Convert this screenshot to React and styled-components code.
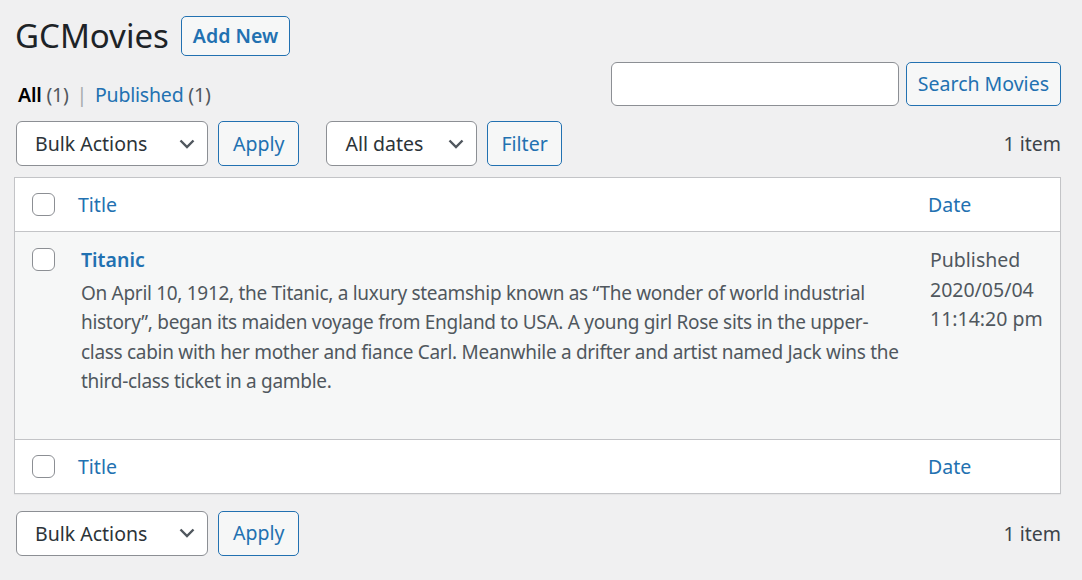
import React from 'react';
import styled, { createGlobalStyle } from 'styled-components';

const GlobalStyle = createGlobalStyle`
  html, body {
    margin: 0;
    padding: 0;
    background: #f0f0f1;
  }
  body {
    font-family: "Noto Sans", "Open Sans", sans-serif;
    font-size: 19.5px;
    color: #3c434a;
  }
`;

const Page = styled.div`
  padding: 16px 21px 0 14px;
`;

const HeadingRow = styled.div`
  display: flex;
  align-items: center;
  gap: 12px;
  height: 40px;
`;

const Heading = styled.h1`
  margin: 0 0 0 1px;
  font-size: 33px;
  font-weight: 400;
  color: #1d2327;
  line-height: 40px;
`;

const Button = styled.button`
  height: ${p => p.$h || 45}px;
  padding: 0 ${p => p.$px || 14}px;
  background: #f6f7f7;
  border: 1px solid #2271b1;
  border-radius: 5px;
  color: #2271b1;
  font-family: inherit;
  font-size: 19.5px;
  font-weight: ${p => (p.$bold ? 600 : 400)};
  line-height: 1;
  white-space: nowrap;
  cursor: pointer;
`;

const SubRow = styled.div`
  display: flex;
  justify-content: space-between;
  align-items: flex-start;
  margin-top: 6px;
  height: 45px;
`;

const Views = styled.div`
  margin: 20px 0 0 4px;
  line-height: 26px;
  color: #50575e;
  letter-spacing: -0.2px;
`;

const ViewLink = styled.span`
  color: ${p => (p.$current ? '#000' : '#2271b1')};
  font-weight: ${p => (p.$current ? 600 : 400)};
`;

const Sep = styled.span`
  color: #a7aaad;
  margin: 0 3px;
`;

const SearchBox = styled.div`
  display: flex;
  gap: 7px;
`;

const SearchInput = styled.input`
  width: 288px;
  height: 44px;
  box-sizing: border-box;
  border: 1px solid #8c8f94;
  border-radius: 6px;
  background: #fff;
  font-family: inherit;
  font-size: 19.5px;
`;

const TableNav = styled.div`
  display: flex;
  align-items: center;
  margin: ${p => p.$m};
  padding-left: 2px;
`;

const Actions = styled.div`
  display: flex;
  gap: 10px;
  margin-right: 27px;
`;

const Select = styled.div`
  width: ${p => p.$w}px;
  height: 45px;
  box-sizing: border-box;
  border: 1px solid #8c8f94;
  border-radius: 6px;
  background: #fff;
  display: flex;
  align-items: center;
  justify-content: space-between;
  padding: 0 12px 0 18px;
  color: #2c3338;
`;

const Count = styled.div`
  margin-left: auto;
  color: #3c434a;
`;

const Table = styled.table`
  width: 100%;
  margin-top: 11px;
  border: 1px solid #c3c4c7;
  border-spacing: 0;
  table-layout: fixed;
  background: #fff;
  box-shadow: 0 1px 1px rgba(0, 0, 0, 0.04);
`;

const HeadCell = styled.th`
  box-sizing: border-box;
  width: ${p => (p.$w ? `${p.$w}px` : 'auto')};
  height: 54px;
  padding: 0 0 0 ${p => p.$pl || 0}px;
  text-align: left;
  font-weight: 400;
  color: #2271b1;
  vertical-align: middle;
  border-${p => p.$edge}: 1px solid #c3c4c7;
`;

const CheckCell = styled.td`
  width: 52px;
  height: 54px;
  padding: ${p => (p.$body ? '16px 0 0 17px' : '0 0 0 17px')};
  vertical-align: ${p => (p.$body ? 'top' : 'middle')};
  box-sizing: border-box;
  border-${p => p.$edge}: 1px solid #c3c4c7;
`;

const Checkbox = styled.span`
  display: block;
  width: 23px;
  height: 23px;
  box-sizing: border-box;
  border: 1px solid #8c8f94;
  border-radius: 6px;
  background: #fff;
`;

const BodyRow = styled.tr`
  background: #f6f7f7;
`;

const Cell = styled.td`
  padding: 13px ${p => p.$pr || 0}px 42px ${p => p.$pl}px;
  vertical-align: top;
  line-height: 29.5px;
  color: #50575e;
`;

const RowTitle = styled.div`
  color: #2271b1;
  font-weight: 600;
`;

const Excerpt = styled.p`
  margin: 4px 0 0;
  font-size: 19px;
  letter-spacing: -0.3px;
  color: #50575e;
`;

function Chevron() {
  return (
    <svg width="16" height="10" viewBox="0 0 16 10">
      <polyline points="1.5,1.5 8,8 14.5,1.5" fill="none" stroke="#50575e" strokeWidth="2.4" />
    </svg>
  );
}

function HeaderRow({ edge }) {
  return (
    <tr>
      <CheckCell $edge={edge}><Checkbox /></CheckCell>
      <HeadCell $pl={11} $edge={edge}>Title</HeadCell>
      <HeadCell $pl={15} $w={147} $edge={edge}>Date</HeadCell>
    </tr>
  );
}

function Nav({ top }) {
  return (
    <TableNav $m={top ? '14px 0 0' : '17px 0 0'}>
      <Actions>
        <Select $w={192}>Bulk Actions<Chevron /></Select>
        <Button $px={14}>Apply</Button>
      </Actions>
      {top && (
        <Actions>
          <Select $w={151}>All dates<Chevron /></Select>
          <Button $px={13}>Filter</Button>
        </Actions>
      )}
      <Count>1 item</Count>
    </TableNav>
  );
}

export default function App() {
  return (
    <>
      <GlobalStyle />
      <Page>
        <HeadingRow>
          <Heading>GCMovies</Heading>
          <Button $h={40} $px={11} $bold>Add New</Button>
        </HeadingRow>
        <SubRow>
          <Views>
            <ViewLink $current>All</ViewLink> (1) <Sep>|</Sep> <ViewLink>Published</ViewLink> (1)
          </Views>
          <SearchBox>
            <SearchInput type="search" />
            <Button $h={44} $px={11}>Search Movies</Button>
          </SearchBox>
        </SubRow>
        <Nav top />
        <Table>
          <thead><HeaderRow edge="bottom" /></thead>
          <tbody>
            <BodyRow>
              <CheckCell $body><Checkbox /></CheckCell>
              <Cell $pl={14} $pr={14}>
                <RowTitle>Titanic</RowTitle>
                <Excerpt>
                  On April 10, 1912, the Titanic, a luxury steamship known as “The wonder of world industrial
                  history”, began its maiden voyage from England to USA. A young girl Rose sits in the upper-class
                  cabin with her mother and fiance Carl. Meanwhile a drifter and artist named Jack wins the
                  third-class ticket in a gamble.
                </Excerpt>
              </Cell>
              <Cell $pl={17}>Published<br />2020/05/04<br />11:14:20 pm</Cell>
            </BodyRow>
          </tbody>
          <tfoot><HeaderRow edge="top" /></tfoot>
        </Table>
        <Nav />
      </Page>
    </>
  );
}
